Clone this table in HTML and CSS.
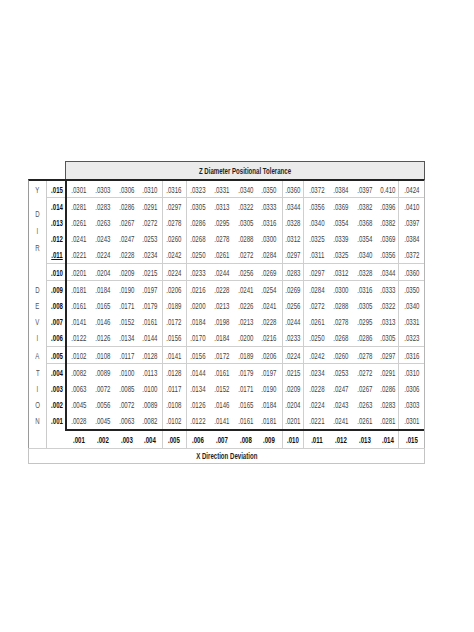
FILE: index.html
```html
<!DOCTYPE html>
<html>
<head>
<meta charset="utf-8">
<link rel="stylesheet" href="styles.css">
</head>
<body>
<div class="chart">
  <div class="head">
    <div class="corner"></div>
    <div class="title"><span>Z Diameter Positional Tolerance</span></div>
  </div>
  <div class="body">
    <div class="letters">
      <div class="lb y"><span>Y</span></div>
      <div class="lb grp center"><span>D</span><span>I</span><span>R</span></div>
      <div class="lb one"></div>
      <div class="lb grp"><span>D</span><span>E</span><span>V</span><span>I</span></div>
      <div class="lb one"><span>A</span></div>
      <div class="lb grp"><span>T</span><span>I</span><span>O</span><span>N</span></div>
      <div class="lb end"></div>
    </div>
    <div class="grid">
      <div class="row first"><b>.015</b><span>.0301</span><span>.0303</span><span>.0306</span><span>.0310</span><span>.0316</span><span>.0323</span><span>.0331</span><span>.0340</span><span>.0350</span><span>.0360</span><span>.0372</span><span>.0384</span><span>.0397</span><span>0.410</span><span>.0424</span></div>
      <div class="row g t"><b>.014</b><span>.0281</span><span>.0283</span><span>.0286</span><span>.0291</span><span>.0297</span><span>.0305</span><span>.0313</span><span>.0322</span><span>.0333</span><span>.0344</span><span>.0356</span><span>.0369</span><span>.0382</span><span>.0396</span><span>.0410</span></div>
      <div class="row g"><b>.013</b><span>.0261</span><span>.0263</span><span>.0267</span><span>.0272</span><span>.0278</span><span>.0286</span><span>.0295</span><span>.0305</span><span>.0316</span><span>.0328</span><span>.0340</span><span>.0354</span><span>.0368</span><span>.0382</span><span>.0397</span></div>
      <div class="row g"><b>.012</b><span>.0241</span><span>.0243</span><span>.0247</span><span>.0253</span><span>.0260</span><span>.0268</span><span>.0278</span><span>.0288</span><span>.0300</span><span>.0312</span><span>.0325</span><span>.0339</span><span>.0354</span><span>.0369</span><span>.0384</span></div>
      <div class="row g"><b class="u">.011</b><span>.0221</span><span>.0224</span><span>.0228</span><span>.0234</span><span>.0242</span><span>.0250</span><span>.0261</span><span>.0272</span><span>.0284</span><span>.0297</span><span>.0311</span><span>.0325</span><span>.0340</span><span>.0356</span><span>.0372</span></div>
      <div class="row s t"><b>.010</b><span>.0201</span><span>.0204</span><span>.0209</span><span>.0215</span><span>.0224</span><span>.0233</span><span>.0244</span><span>.0256</span><span>.0269</span><span>.0283</span><span>.0297</span><span>.0312</span><span>.0328</span><span>.0344</span><span>.0360</span></div>
      <div class="row g t"><b>.009</b><span>.0181</span><span>.0184</span><span>.0190</span><span>.0197</span><span>.0206</span><span>.0216</span><span>.0228</span><span>.0241</span><span>.0254</span><span>.0269</span><span>.0284</span><span>.0300</span><span>.0316</span><span>.0333</span><span>.0350</span></div>
      <div class="row g"><b>.008</b><span>.0161</span><span>.0165</span><span>.0171</span><span>.0179</span><span>.0189</span><span>.0200</span><span>.0213</span><span>.0226</span><span>.0241</span><span>.0256</span><span>.0272</span><span>.0288</span><span>.0305</span><span>.0322</span><span>.0340</span></div>
      <div class="row g"><b>.007</b><span>.0141</span><span>.0146</span><span>.0152</span><span>.0161</span><span>.0172</span><span>.0184</span><span>.0198</span><span>.0213</span><span>.0228</span><span>.0244</span><span>.0261</span><span>.0278</span><span>.0295</span><span>.0313</span><span>.0331</span></div>
      <div class="row g"><b>.006</b><span>.0122</span><span>.0126</span><span>.0134</span><span>.0144</span><span>.0156</span><span>.0170</span><span>.0184</span><span>.0200</span><span>.0216</span><span>.0233</span><span>.0250</span><span>.0268</span><span>.0286</span><span>.0305</span><span>.0323</span></div>
      <div class="row s t"><b>.005</b><span>.0102</span><span>.0108</span><span>.0117</span><span>.0128</span><span>.0141</span><span>.0156</span><span>.0172</span><span>.0189</span><span>.0206</span><span>.0224</span><span>.0242</span><span>.0260</span><span>.0278</span><span>.0297</span><span>.0316</span></div>
      <div class="row g t"><b>.004</b><span>.0082</span><span>.0089</span><span>.0100</span><span>.0113</span><span>.0128</span><span>.0144</span><span>.0161</span><span>.0179</span><span>.0197</span><span>.0215</span><span>.0234</span><span>.0253</span><span>.0272</span><span>.0291</span><span>.0310</span></div>
      <div class="row g"><b>.003</b><span>.0063</span><span>.0072</span><span>.0085</span><span>.0100</span><span>.0117</span><span>.0134</span><span>.0152</span><span>.0171</span><span>.0190</span><span>.0209</span><span>.0228</span><span>.0247</span><span>.0267</span><span>.0286</span><span>.0306</span></div>
      <div class="row g"><b>.002</b><span>.0045</span><span>.0056</span><span>.0072</span><span>.0089</span><span>.0108</span><span>.0126</span><span>.0146</span><span>.0165</span><span>.0184</span><span>.0204</span><span>.0224</span><span>.0243</span><span>.0263</span><span>.0283</span><span>.0303</span></div>
      <div class="row g"><b>.001</b><span>.0028</span><span>.0045</span><span>.0063</span><span>.0082</span><span>.0102</span><span>.0122</span><span>.0141</span><span>.0161</span><span>.0181</span><span>.0201</span><span>.0221</span><span>.0241</span><span>.0261</span><span>.0281</span><span>.0301</span></div>
      <div class="row lab"><i></i><b>.001</b><b>.002</b><b>.003</b><b>.004</b><b>.005</b><b>.006</b><b>.007</b><b>.008</b><b>.009</b><b>.010</b><b>.011</b><b>.012</b><b>.013</b><b>.014</b><b>.015</b></div>
    </div>
  </div>
  <div class="foot"><span>X Direction Deviation</span></div>
</div>
</body>
</html>
```

FILE: styles.css
```css
* { box-sizing: border-box; margin: 0; padding: 0; }

body {
  background: #fff;
  font-family: "Liberation Sans", Arial, sans-serif;
}

.chart {
  margin: 161px 0 0 28px;
  width: 397px;
  font-size: 9.5px;
  color: #3f3f3f;
}

/* condensed glyphs, as in the source table */
.title span,
.foot span,
.lb span,
.row > * { transform: scaleX(0.64); }
.title span,
.foot span { display: inline-block; }

.head { display: flex; height: 18px; }
.corner { width: 37px; }
.title {
  flex: 1;
  background: #ebebeb;
  border: 1px solid #555;
  border-bottom: 0;
  font-weight: bold;
  color: #1e1e1e;
  text-align: center;
  line-height: 17px;
}

.body {
  display: flex;
  border-top: 2px solid #222;
  border-left: 1px solid #9a9a9a;
  border-right: 1px solid #b5b5b5;
}

.letters {
  width: 18px;
  border-right: 1px solid #cbcbcb;
  display: flex;
  flex-direction: column;
  color: #555;
}
.lb { display: flex; flex-direction: column; align-items: center; }
.lb span { display: flex; align-items: center; }
.lb.y { height: 16px; justify-content: center; }
.lb.grp { height: 66px; padding-top: 1px; }
.lb.grp span { height: 16.25px; }
.lb.grp.center { justify-content: center; }
.lb.grp.center span { height: 17px; }
.lb.one { height: 17px; padding-top: 1px; justify-content: center; }
.lb.end { height: 19px; }

.grid { flex: 1; display: flex; flex-direction: column; }

.row {
  --lines:
    linear-gradient(#222, #222) 18px 0 / 2px 100% no-repeat,
    linear-gradient(#cfcfcf, #cfcfcf) 115px 0 / 1px 100% no-repeat,
    linear-gradient(#cfcfcf, #cfcfcf) 139px 0 / 1px 100% no-repeat,
    linear-gradient(#cfcfcf, #cfcfcf) 235px 0 / 1px 100% no-repeat,
    linear-gradient(#cfcfcf, #cfcfcf) 256px 0 / 1px 100% no-repeat,
    linear-gradient(#cfcfcf, #cfcfcf) 351px 0 / 1px 100% no-repeat;
  display: grid;
  grid-template-columns: 20px repeat(15, 1fr);
  background: var(--lines);
}
.row.first { height: 16px; }
.row.g { height: 16.25px; }
.row.s { height: 17px; }
.row.g.t { height: 17.25px; }
.row.t {
  padding-top: 1px;
  background: var(--lines), linear-gradient(#cfcfcf, #cfcfcf) 0 0 / 100% 1px no-repeat;
}

.row > * {
  display: flex;
  align-items: center;
  justify-content: center;
  font-style: normal;
  font-weight: normal;
}
.row > b:first-child {
  font-weight: bold;
  color: #111;
}
.u { text-decoration: underline; }

.row.lab {
  height: 19px;
  padding-top: 2px;
  background:
    linear-gradient(#222, #222) 18px 0 / calc(100% - 18px) 2px no-repeat,
    linear-gradient(#cfcfcf, #cfcfcf) 115px 0 / 1px 100% no-repeat,
    linear-gradient(#cfcfcf, #cfcfcf) 139px 0 / 1px 100% no-repeat,
    linear-gradient(#cfcfcf, #cfcfcf) 235px 0 / 1px 100% no-repeat,
    linear-gradient(#cfcfcf, #cfcfcf) 256px 0 / 1px 100% no-repeat,
    linear-gradient(#cfcfcf, #cfcfcf) 351px 0 / 1px 100% no-repeat;
}
.row.lab > b {
  font-weight: bold;
  color: #111;
}

.foot {
  height: 16px;
  border: 1px solid #c4c4c4;
  border-top-color: #cfcfcf;
  font-weight: bold;
  color: #1e1e1e;
  text-align: center;
  line-height: 14px;
}
```
